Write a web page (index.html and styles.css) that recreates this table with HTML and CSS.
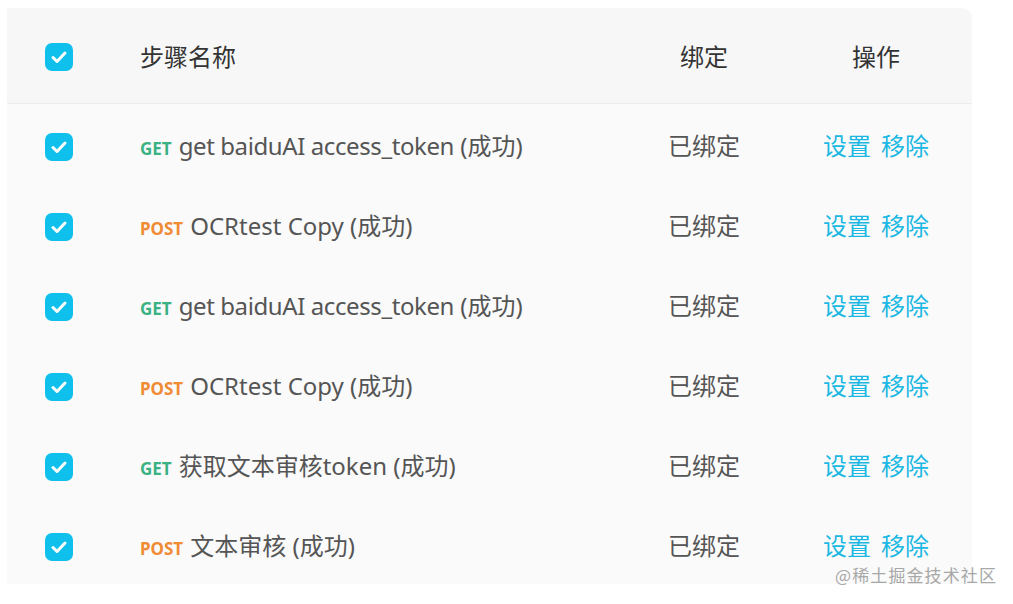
FILE: index.html
```html
<!DOCTYPE html>
<html lang="zh-CN">
<head>
    <meta charset="UTF-8">
    <meta name="viewport" content="width=device-width, initial-scale=1.0">
    <title>步骤列表</title>
    <link rel="stylesheet" href="styles.css">
</head>
<body>
    <div class="table">
        <div class="row head">
            <span class="check"><svg viewBox="0 0 28 28"><path d="M8 14.5l4 4 8-8.5"/></svg></span>
            <div class="name">步骤名称</div>
            <div class="bind">绑定</div>
            <div class="ops">操作</div>
        </div>

        <div class="rows">
            <div class="row">
                <span class="check"><svg viewBox="0 0 28 28"><path d="M8 14.5l4 4 8-8.5"/></svg></span>
                <div class="name"><span class="method get">GET</span><span class="latin">get baiduAI access_token</span> (成功)</div>
                <div class="bind">已绑定</div>
                <div class="ops"><a>设置</a><a>移除</a></div>
            </div>
            <div class="row">
                <span class="check"><svg viewBox="0 0 28 28"><path d="M8 14.5l4 4 8-8.5"/></svg></span>
                <div class="name"><span class="method post">POST</span>OCRtest Copy (成功)</div>
                <div class="bind">已绑定</div>
                <div class="ops"><a>设置</a><a>移除</a></div>
            </div>
            <div class="row">
                <span class="check"><svg viewBox="0 0 28 28"><path d="M8 14.5l4 4 8-8.5"/></svg></span>
                <div class="name"><span class="method get">GET</span><span class="latin">get baiduAI access_token</span> (成功)</div>
                <div class="bind">已绑定</div>
                <div class="ops"><a>设置</a><a>移除</a></div>
            </div>
            <div class="row">
                <span class="check"><svg viewBox="0 0 28 28"><path d="M8 14.5l4 4 8-8.5"/></svg></span>
                <div class="name"><span class="method post">POST</span>OCRtest Copy (成功)</div>
                <div class="bind">已绑定</div>
                <div class="ops"><a>设置</a><a>移除</a></div>
            </div>
            <div class="row">
                <span class="check"><svg viewBox="0 0 28 28"><path d="M8 14.5l4 4 8-8.5"/></svg></span>
                <div class="name"><span class="method get">GET</span>获取文本审核token (成功)</div>
                <div class="bind">已绑定</div>
                <div class="ops"><a>设置</a><a>移除</a></div>
            </div>
            <div class="row">
                <span class="check"><svg viewBox="0 0 28 28"><path d="M8 14.5l4 4 8-8.5"/></svg></span>
                <div class="name"><span class="method post">POST</span>文本审核 (成功)</div>
                <div class="bind">已绑定</div>
                <div class="ops"><a>设置</a><a>移除</a></div>
            </div>
        </div>
    </div>

    <div class="watermark">@稀土掘金技术社区</div>
</body>
</html>
```

FILE: styles.css
```css
* { box-sizing: border-box; margin: 0; }
body {
    background: #fff; font-family: "Noto Sans", "Noto Sans CJK SC", sans-serif;
    padding: 8px 0 0 7px; position: relative; min-height: 100vh;
}
.table { width: 965px; background: #fafafa; border-radius: 0 10px 0 0; overflow: hidden; }

.row { display: flex; align-items: center; height: 80px; padding: 0 21px 0 38px; font-size: 24px; color: #555; }
.row.head { height: 96px; background: #f7f7f7; border-bottom: 1px solid #ececec; color: #333; }
.row.head .check { margin-top: 3px; }
.rows .check { margin-top: 5px; }

.check {
    width: 28px; height: 28px; border-radius: 7px; background: #0fc0ec;
    display: flex; flex: none; margin-right: 67px;
}
.check svg { width: 28px; height: 28px; fill: none; stroke: #fff; stroke-width: 3; stroke-linecap: round; stroke-linejoin: round; }

.name { flex: 1; white-space: nowrap; }
.name .latin { letter-spacing: -0.4px; }
.bind { width: 114px; text-align: center; }
.ops { width: 150px; margin-left: 40px; display: flex; justify-content: center; gap: 10px; }
.ops a { color: #1bb8e3; cursor: pointer; }

.method { font-size: 17px; font-weight: 700; margin-right: 7px; }
.method.get { color: #3bb184; }
.method.post { color: #f08b36; }

.watermark {
    position: absolute; left: 835px; top: 562px;
    font-size: 17px; color: #a8a8a8; font-family: "Noto Sans CJK SC", sans-serif;
    letter-spacing: 1.1px;
}
```
